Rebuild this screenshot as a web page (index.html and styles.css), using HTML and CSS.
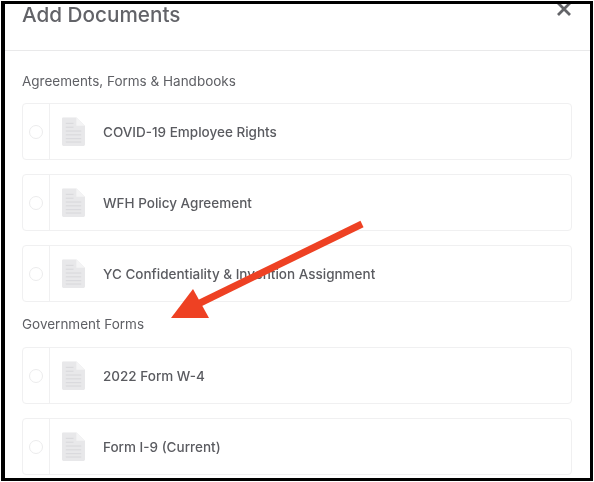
FILE: index.html
```html
<!DOCTYPE html>
<html lang="en">
<head>
<meta charset="utf-8">
<title>Add Documents</title>
<link rel="stylesheet" href="styles.css">
</head>
<body>
<main class="frame">
  <header class="head">
    <h1 class="title">Add Documents</h1>
    <svg class="close" width="16" height="16" viewBox="0 0 16 16" aria-label="Close"><path d="M2 2 14 14M14 2 2 14"/></svg>
  </header>
  <section class="body">
    <h2 class="section">Agreements, Forms &amp; Handbooks</h2>
    <ul class="list">
      <li class="row"><span class="check"><i class="radio"></i></span><svg class="doc" viewBox="0 0 24 30"><use href="#doc"/></svg><span class="name">COVID-19 Employee Rights</span></li>
      <li class="row"><span class="check"><i class="radio"></i></span><svg class="doc" viewBox="0 0 24 30"><use href="#doc"/></svg><span class="name">WFH Policy Agreement</span></li>
      <li class="row"><span class="check"><i class="radio"></i></span><svg class="doc" viewBox="0 0 24 30"><use href="#doc"/></svg><span class="name">YC Confidentiality &amp; Invention Assignment</span></li>
    </ul>
    <h2 class="section section-next">Government Forms</h2>
    <ul class="list">
      <li class="row"><span class="check"><i class="radio"></i></span><svg class="doc" viewBox="0 0 24 30"><use href="#doc"/></svg><span class="name">2022 Form W-4</span></li>
      <li class="row"><span class="check"><i class="radio"></i></span><svg class="doc" viewBox="0 0 24 30"><use href="#doc"/></svg><span class="name">Form I-9 (Current)</span></li>
    </ul>
  </section>
</main>
<svg class="arrow" width="594" height="482" viewBox="0 0 594 482" aria-hidden="true">
  <path class="arrow-line" d="M362 224 198 304"/>
  <path class="arrow-head" d="M193 289 209 318H171Z"/>
</svg>
<svg class="defs" width="0" height="0" aria-hidden="true">
  <symbol id="doc" viewBox="0 0 24 30">
    <path fill="#e8e8ea" d="M1.5 0H15L24 9V28.5A1.5 1.5 0 0 1 22.500 30H1.500A1.500 1.500 0 0 1 0 28.500V1.500A1.500 1.500 0 0 1 1.500 0Z"/>
    <path fill="#f4f4f5" d="M15 0 24 9H15Z"/>
    <path stroke="#d6d6d9" stroke-width="1" d="M4 6.500H12M4 10.500H12M4 14.500H20M4 18.500H20M4 22.500H20M4 26H20"/>
  </symbol>
</svg>
</body>
</html>
```

FILE: styles.css
```css
* { box-sizing: border-box; }
html, body { margin: 0; padding: 0; background: #fff; }
body { width: 594px; height: 482px; overflow: hidden; font-family: Inter, "Liberation Sans", sans-serif; color: #5c5d62; }
.frame { width: 592px; height: 480px; margin: 1px 0 0 1px; border: solid #000; border-width: 3px 3px 3px 4px; overflow: hidden; background: #fff; filter: blur(0.35px); }
.head { height: 47px; border-bottom: 1px solid #e9e9ea; display: flex; justify-content: space-between; padding: 0 18px 0 17px; }
.title { margin: -2px 0 0; font-size: 20.700px; line-height: 26px; font-weight: 500; color: #626368; }
.close { margin: -3px 0 0 0; flex: none; }
.close path { stroke: #636468; stroke-width: 2.800; fill: none; }
.body { padding: 0 17px; }
.section { margin: 0; padding-top: 21px; font-size: 13.500px; line-height: 18px; font-weight: 400; color: #5f6065; height: 52px; }
.section-next { padding-top: 13px; height: 45px; }
.list { list-style: none; margin: 0; padding: 0; display: flex; flex-direction: column; gap: 14px; }
.row { height: 57px; width: 550px; border: 1px solid #f0f0f1; border-radius: 4px; display: flex; align-items: center; }
.check { width: 27px; align-self: stretch; border-right: 1px solid #f0f0f1; display: flex; align-items: center; justify-content: center; flex: none; }
.radio { width: 14px; height: 14px; border: 1px solid #ececed; border-radius: 50%; display: block; }
.doc { width: 23px; height: 29px; margin-left: 12px; flex: none; }
.name { margin-left: 18px; font-size: 13.500px; font-weight: 500; color: #5a5b60; }
.arrow { position: absolute; left: 0; top: 0; pointer-events: none; filter: blur(0.3px); }
.arrow-line { stroke: #ee4123; stroke-width: 7; fill: none; }
.arrow-head { fill: #ee4123; }
.defs { position: absolute; }
```
